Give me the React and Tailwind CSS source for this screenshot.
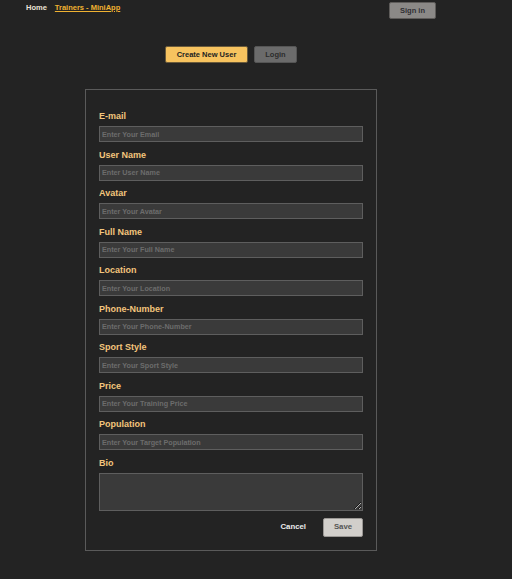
import React from "react";

const fields = [
  ["E-mail", "Enter Your Email"],
  ["User Name", "Enter User Name"],
  ["Avatar", "Enter Your Avatar"],
  ["Full Name", "Enter Your Full Name"],
  ["Location", "Enter Your Location"],
  ["Phone-Number", "Enter Your Phone-Number"],
  ["Sport Style", "Enter Your Sport Style"],
  ["Price", "Enter Your Training Price"],
  ["Population", "Enter Your Target Population"],
];

export default function App() {
  return (
    <div className="min-h-[579px] bg-[#232323] font-['Liberation_Sans',Arial,sans-serif]">
      <div className="w-[462px]">
        <nav className="flex items-start justify-between px-[26px] pt-[2px]">
          <div className="flex gap-[8px] pt-[1px] text-[7.5px] font-bold leading-[10px]">
            <a className="text-[#ece4d6]">Home</a>
            <a className="text-[#f0b232] underline">Trainers - MiniApp</a>
          </div>
          <button className="h-[17px] w-[47px] rounded-[2px] border border-[#5e5c5a] bg-[#8b8987] text-[7.5px] font-bold leading-none text-[#2f2f33]">
            Sign in
          </button>
        </nav>
        <div className="mt-[27px] flex justify-center gap-[6px]">
          <button className="h-[17px] w-[83px] rounded-[2px] border border-[#6a5a3a] bg-[#f7c35f] text-[7.5px] font-bold leading-none text-[#222]">
            Create New User
          </button>
          <button className="h-[17px] w-[43px] rounded-[2px] border border-[#555] bg-[#6b6b6b] text-[7.5px] font-bold leading-none text-[#2c2c2c]">
            Login
          </button>
        </div>
        <form className="mx-auto mt-[26px] w-[292px] border border-[#5a5a5a] px-[13px] pb-[13px] pt-[20px]">
          <div className="flex flex-col gap-[6.5px]">
            {fields.map(([label, ph]) => (
              <div key={label} className="flex flex-col">
                <label className="mb-[4px] text-[9px] font-bold leading-[12px] text-[#f3c57c]">
                  {label}
                </label>
                <input
                  placeholder={ph}
                  className="h-[16px] w-full border border-[#5e5e5e] bg-[#3a3a3a] px-[2px] text-[7.2px] font-bold leading-none text-[#ddd] outline-none placeholder:text-[#6c6c6c]"
                />
              </div>
            ))}
            <div className="flex flex-col">
              <label className="mb-[4px] text-[9px] font-bold leading-[12px] text-[#f3c57c]">
                Bio
              </label>
              <textarea className="block h-[38px] w-full border border-[#5e5e5e] bg-[#3a3a3a] outline-none" />
            </div>
          </div>
          <div className="mt-[7px] flex items-center justify-end gap-[17px]">
            <button type="button" className="text-[7.8px] font-bold leading-none text-[#ececec]">
              Cancel
            </button>
            <button type="button" className="h-[19px] w-[40px] rounded-[2px] border border-[#9a9794] bg-[#d2cfcb] text-[7.8px] font-bold leading-none text-[#555]">
              Save
            </button>
          </div>
        </form>
      </div>
    </div>
  );
}
